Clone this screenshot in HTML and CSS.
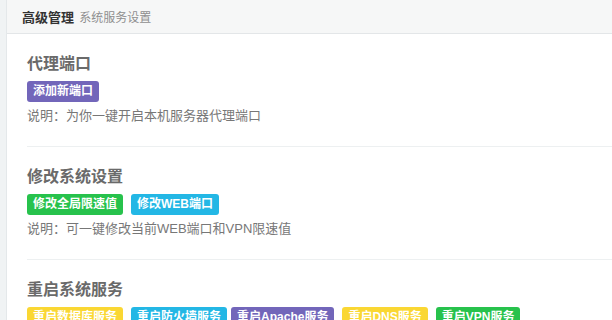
FILE: index.html
```html
<!DOCTYPE html>
<html lang="zh-CN">
<head>
<meta charset="utf-8">
<title>高级管理</title>
<link rel="stylesheet" href="styles.css">
</head>
<body>
<div class="page">
  <aside class="rail"></aside>
  <main class="panel">
    <header class="panel-head">
      <span class="head-title">高级管理</span>
      <span class="head-sub">系统服务设置</span>
    </header>
    <section class="block">
      <h3 class="block-title">代理端口</h3>
      <div class="badges">
        <span class="badge badge-primary">添加新端口</span>
      </div>
      <p class="note">说明：为你一键开启本机服务器代理端口</p>
    </section>
    <section class="block">
      <h3 class="block-title">修改系统设置</h3>
      <div class="badges">
        <span class="badge badge-success">修改全局限速值</span>
        <span class="badge badge-info">修改WEB端口</span>
      </div>
      <p class="note">说明：可一键修改当前WEB端口和VPN限速值</p>
    </section>
    <section class="block">
      <h3 class="block-title">重启系统服务</h3>
      <div class="badges">
        <span class="badge badge-warning">重启数据库服务</span>
        <span class="badge badge-info">重启防火墙服务</span>
        <span class="badge badge-primary badge-near">重启Apache服务</span>
        <span class="badge badge-warning">重启DNS服务</span>
        <span class="badge badge-success">重启VPN服务</span>
      </div>
    </section>
  </main>
</div>
</body>
</html>
```
FILE: styles.css
```css
html, body {
  margin: 0;
  padding: 0;
  background: #ffffff;
}
body {
  font-family: "Liberation Sans", "Noto Sans CJK SC", sans-serif;
  font-size: 12px;
  color: #777777;
  overflow: hidden;
}
.page {
  display: flex;
  width: 612px;
  height: 320px;
  overflow: hidden;
}
.rail {
  flex: 0 0 6px;
  background: #f0f3f4;
  border-right: 1px solid #e4e8ea;
}
.panel {
  flex: 1 1 auto;
  min-width: 0;
}
.panel-head {
  height: 33px;
  line-height: 33px;
  padding: 0 15px;
  background: #f6f7f7;
  border-bottom: 1px solid #e3e6e8;
  white-space: nowrap;
}
.head-title {
  font-family: "Noto Sans CJK SC", sans-serif;
  font-size: 13px;
  font-weight: bold;
  color: #333333;
}
.head-sub {
  font-family: "Noto Sans CJK SC", sans-serif;
  font-size: 12px;
  color: #8f8f8f;
  margin-left: 2px;
}
.block {
  margin-left: 20px;
  padding: 18px 0 21px;
  border-bottom: 1px solid #edf0f1;
}
.block-title {
  margin: 0;
  font-family: "Noto Sans CJK SC", sans-serif;
  font-size: 16px;
  line-height: 20px;
  font-weight: bold;
  color: #6a6a6a;
}
.badges {
  display: flex;
  gap: 8px;
  margin-top: 9px;
  white-space: nowrap;
}
.badge {
  display: inline-block;
  height: 21px;
  line-height: 21px;
  padding: 0 6px;
  border-radius: 3px;
  font-size: 12px;
  font-weight: bold;
  color: #ffffff;
}
.badge-near {
  margin-left: -4px;
}
.badge-primary { background: #7266ba; }
.badge-success { background: #27c24c; }
.badge-info { background: #23b7e5; }
.badge-warning { background: #fad733; }
.note {
  margin: 5px 0 0;
  font-size: 13px;
  line-height: 18px;
  color: #777777;
  white-space: nowrap;
}
```
